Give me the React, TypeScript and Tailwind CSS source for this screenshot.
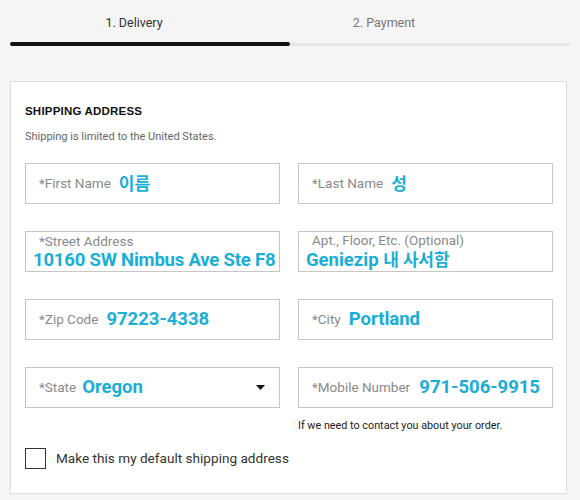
import React from 'react'

const label = "text-[13.5px] text-[#8a8a8a] font-['Roboto',sans-serif] whitespace-nowrap"
const value = "text-[18.5px] font-bold text-[#1aaed6] font-['Roboto','Noto_Sans_CJK_KR',sans-serif] whitespace-nowrap leading-none"
const ko = "text-[17px] font-['Noto_Sans_CJK_KR',sans-serif]"

function Field({ name, val }: { name: string; val: React.ReactNode }) {
  return (
    <div className="h-[41px] border border-[#c6c6c6] bg-white flex items-center pl-[13px] pr-[12px] gap-[8px]">
      <span className={label}>{name}</span>
      <span className={value}>{val}</span>
    </div>
  )
}

function StackedField({ name, val, tight }: { name: string; val: React.ReactNode; tight?: boolean }) {
  return (
    <div className="h-[41px] border border-[#c6c6c6] bg-white flex flex-col justify-center pl-[7px] pr-[8px]">
      <span className={`${label} pl-[6px] leading-[14px]`}>{name}</span>
      <span className={`${value} mt-[3px] ${tight ? 'tracking-[-0.2px]' : ''}`}>{val}</span>
    </div>
  )
}

export default function App() {
  return (
    <div className="w-[580px] h-[500px] overflow-hidden bg-[#f5f5f5] font-['Roboto',sans-serif]">
      {/* Steps */}
      <div className="px-[10px] pt-[14px]">
        <div className="flex -ml-[1px]">
          <div className="w-[250px] text-center text-[12.5px] text-[#333] leading-[18px]">1. Delivery</div>
          <div className="w-[250px] text-center text-[12.5px] text-[#777] leading-[18px]">2. Payment</div>
        </div>
        <div className="flex items-center mt-[10px] h-[4px]">
          <div className="w-[280px] h-[4px] bg-[#111] rounded-full" />
          <div className="flex-1 h-[3px] bg-[#e6e6e6]" />
        </div>
      </div>

      {/* Card */}
      <div className="ml-[10px] mt-[35px] w-[557px] h-[413px] bg-white border border-[#dedede] pt-[22px] px-[14px]">
        <h2 className="text-[11.5px] font-bold text-[#111] tracking-[0.2px] leading-[14px] font-['Liberation_Sans',sans-serif]">
          SHIPPING ADDRESS
        </h2>
        <p className="mt-[13px] text-[11px] text-[#666] leading-[12px]">Shipping is limited to the United States.</p>

        <div className="mt-[20px] grid grid-cols-[255px_255px] gap-x-[18px] gap-y-[27px]">
          <Field name="*First Name" val={<span className={ko}>이름</span>} />
          <Field name="*Last Name" val={<span className={ko}>성</span>} />
          <StackedField name="*Street Address" val="10160 SW Nimbus Ave Ste F8" tight />
          <StackedField
            name="Apt., Floor, Etc. (Optional)"
            val={
              <>
                Geniezip <span className={ko}>내 사서함</span>
              </>
            }
          />
          <Field name="*Zip Code" val="97223-4338" />
          <Field name="*City" val="Portland" />
          <div className="h-[41px] border border-[#c6c6c6] bg-white flex items-center pl-[13px] pr-[14px] gap-[6px]">
            <span className={label}>*State</span>
            <span className={value}>Oregon</span>
            <svg className="ml-auto" width="9" height="5" viewBox="0 0 9 5">
              <path d="M0 0h9L4.5 5z" fill="#111" />
            </svg>
          </div>
          <div>
            <div className="h-[41px] border border-[#c6c6c6] bg-white flex items-center pl-[13px] pr-[12px]">
              <span className={label}>*Mobile Number</span>
              <span className={`${value} ml-auto`}>971-506-9915</span>
            </div>
            <p className="mt-[12px] text-[10.8px] text-[#222] leading-[12px]">If we need to contact you about your order.</p>
          </div>
        </div>

        <label className="mt-[16px] flex items-center gap-[10px]">
          <span className="w-[21px] h-[21px] border border-[#333] bg-white" />
          <span className="text-[13.6px] text-[#333]">Make this my default shipping address</span>
        </label>
      </div>
    </div>
  )
}
